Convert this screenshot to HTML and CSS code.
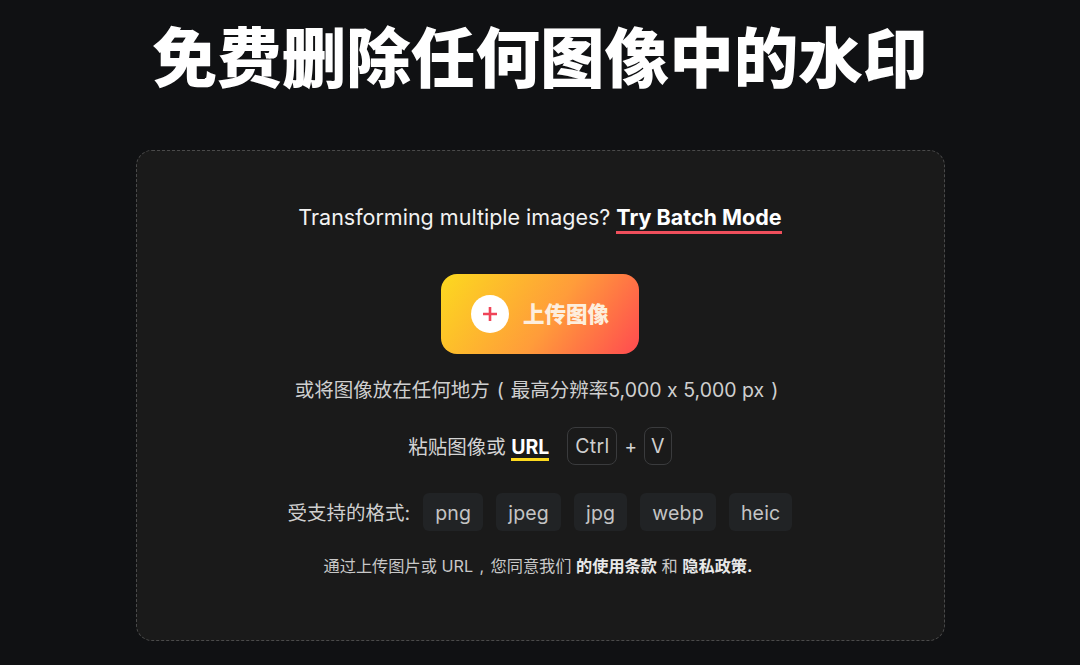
FILE: index.html
```html
<!DOCTYPE html>
<html lang="zh">
<head>
<meta charset="utf-8">
<title>免费删除任何图像中的水印</title>
<link rel="stylesheet" href="styles.css">
</head>
<body>
<main class="page">
  <h1 class="title">免费删除任何图像中的水印</h1>
  <section class="card">
    <p class="batch">Transforming multiple images? <a class="batch-link">Try Batch Mode</a></p>
    <button class="upload">
      <span class="plus"><svg width="14" height="14" viewBox="0 0 14 14"><path d="M7 0v14M0 7h14" stroke="#ef4458" stroke-width="2.6" fill="none"/></svg></span>
      <span class="upload-text">上传图像</span>
    </button>
    <p class="drop">或将图像放在任何地方<span class="punct">(</span>最高分辨率5,000 x 5,000 px<span class="punct">)</span></p>
    <div class="paste">
      <span>粘贴图像或 <a class="url">URL</a></span>
      <span class="keys"><kbd class="key">Ctrl</kbd><span class="key-plus">+</span><kbd class="key key-narrow">V</kbd></span>
    </div>
    <div class="formats">
      <span class="formats-label">受支持的格式:</span>
      <span class="chip">png</span>
      <span class="chip">jpeg</span>
      <span class="chip">jpg</span>
      <span class="chip">webp</span>
      <span class="chip">heic</span>
    </div>
    <p class="terms">通过上传图片或 URL<span class="punct">,</span>您同意我们 <b>的使用条款</b> 和 <b>隐私政策.</b></p>
  </section>
</main>
</body>
</html>
```
FILE: styles.css
```css
* { box-sizing: border-box; }
html, body { margin: 0; height: 100%; }
body {
  background: #101113;
  color: #fff;
  font-family: Inter, "Noto Sans CJK SC", sans-serif;
  overflow: hidden;
}
.page { display: flex; flex-direction: column; align-items: center; }
.title {
  margin: 19px 0 0;
  height: 131px;
  font-size: 64.6px;
  line-height: 80px;
  font-weight: 900;
  color: #fff;
  white-space: nowrap;
}
.card {
  width: 809px;
  height: 491px;
  background: #1a1a1a;
  border: 1px dashed #4a4a4a;
  border-radius: 16px;
  display: flex;
  flex-direction: column;
  align-items: center;
  padding-top: 52px;
}
.batch { margin: 0; font-size: 21.5px; line-height: 28px; color: #f2f2f2; }
.batch-link {
  font-weight: 700;
  color: #fff;
  display: inline-block;
  border-bottom: 3px solid #ef4f5c;
  line-height: 27px;
}
.upload {
  margin-top: 40px;
  width: 198px;
  height: 80px;
  border: 0;
  border-radius: 16px;
  background: linear-gradient(125deg, #fcd91f 0%, #ff9c3a 55%, #ff4a50 100%);
  display: flex;
  align-items: center;
  justify-content: center;
  gap: 14px;
  padding: 0;
  font-family: inherit;
}
.plus {
  width: 38px;
  height: 38px;
  border-radius: 50%;
  background: #fff;
  display: flex;
  align-items: center;
  justify-content: center;
}
.upload-text { font-size: 21.5px; font-weight: 900; color: #fdeedd; padding-bottom: 3px; }
.drop { margin: 22px 0 0; font-size: 19.5px; line-height: 28px; color: #cfcfcf; }
.punct { display: inline-block; width: 1.08em; text-align: center; }
.paste {
  margin-top: 23px;
  display: flex;
  align-items: center;
  gap: 18px;
  font-size: 19.5px;
  color: #d4d4d4;
  height: 38px;
}
.url {
  font-weight: 700;
  color: #fff;
  display: inline-block;
  border-bottom: 3px solid #fcd91f;
  line-height: 22px;
}
.keys { display: flex; align-items: center; gap: 7px; }
.key {
  font-family: inherit;
  font-size: 19.5px;
  height: 38px;
  line-height: 36px;
  padding: 0 7px;
  border: 1px solid #3a3b3d;
  border-radius: 8px;
  color: #cfcfcf;
  background: #1a1a1a;
  letter-spacing: 0.3px;
}
.key-narrow { padding: 0 6px; }
.key-plus { font-size: 19px; color: #d4d4d4; }
.formats {
  margin-top: 28px;
  display: flex;
  align-items: center;
  gap: 13px;
  font-size: 19.5px;
  color: #cfcfcf;
}
.formats-label { margin-top: -2px; }
.chip {
  height: 38px;
  line-height: 40px;
  padding: 0 12px;
  border-radius: 6px;
  background: #212325;
  color: #c4c4c4;
  letter-spacing: 0.2px;
}
.terms { margin: 22px 0 0; padding-right: 4px; font-size: 16.2px; line-height: 26px; color: #c8c8c8; }
.terms b { color: #e8e8e8; font-weight: 700; }
```
